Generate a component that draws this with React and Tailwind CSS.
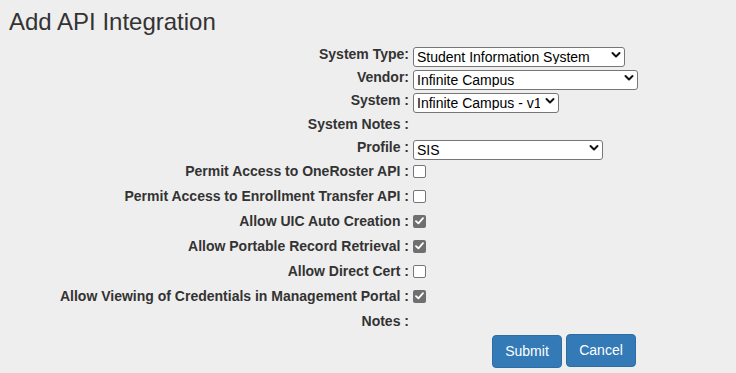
import React from "react";

function Chevron() {
  return (
    <svg
      className="pointer-events-none absolute right-[4px] top-1/2 -translate-y-1/2"
      width="10"
      height="7"
      viewBox="0 0 10 7"
      fill="none"
    >
      <path d="M1.5 1.5 L5 5 L8.5 1.5" stroke="#111" strokeWidth="2" strokeLinecap="round" strokeLinejoin="round" />
    </svg>
  );
}

function Select({ value, width }) {
  return (
    <div className={`relative h-[20px] ${width}`}>
      <select
        defaultValue={value}
        className="h-full w-full appearance-none rounded-[3px] border border-[#767676] bg-white pl-[3px] pr-[18px] text-[14px] leading-none text-black outline-none"
      >
        <option>{value}</option>
      </select>
      <Chevron />
    </div>
  );
}

function Check({ checked }) {
  if (checked) {
    return (
      <span className="flex h-[13px] w-[13px] items-center justify-center rounded-[2px] bg-[#6f6f6f]">
        <svg width="9" height="8" viewBox="0 0 9 8" fill="none">
          <path d="M1 4.2 L3.4 6.4 L8 1.2" stroke="white" strokeWidth="1.8" strokeLinecap="round" strokeLinejoin="round" />
        </svg>
      </span>
    );
  }
  return <span className="block h-[13px] w-[13px] rounded-[2px] border border-[#767676] bg-white" />;
}

function Row({ label, height, children }) {
  return (
    <div className={`flex items-center ${height}`}>
      <div className="w-[409px] shrink-0 text-right text-[14px] font-bold text-[#333]">{label}</div>
      <div className="ml-[4px] flex items-center">{children}</div>
    </div>
  );
}

const checks = [
  ["Permit Access to OneRoster API :", false],
  ["Permit Access to Enrollment Transfer API :", false],
  ["Allow UIC Auto Creation :", true],
  ["Allow Portable Record Retrieval :", true],
  ["Allow Direct Cert :", false],
  ["Allow Viewing of Credentials in Management Portal :", true],
];

export default function App() {
  return (
    <div className="h-[373px] w-[736px] overflow-hidden bg-[#eeeeee] font-['Liberation_Sans',Arial,sans-serif] text-[#333]">
      <h2 className="pl-[9px] pt-[9px] text-[24px] font-normal leading-[1.1]">Add API Integration</h2>

      <div className="mt-[8px]">
        <Row label="System Type:" height="h-[23px]">
          <Select value="Student Information System" width="w-[212px]" />
        </Row>
        <Row label="Vendor:" height="h-[23px]">
          <Select value="Infinite Campus" width="w-[225px]" />
        </Row>
        <Row label="System :" height="h-[23px]">
          <Select value="Infinite Campus - v1" width="w-[146px]" />
        </Row>
        <Row label="System Notes :" height="h-[24px]" />
        <Row label="Profile :" height="h-[22.5px]">
          <Select value="SIS" width="w-[190px]" />
        </Row>

        {checks.map(([label, checked]) => (
          <Row key={label} label={label} height="h-[25px]">
            <Check checked={checked} />
          </Row>
        ))}

        <Row label="Notes :" height="h-[25px]" />

        <div className="ml-[492px] flex items-start gap-[4px]">
          <button className="mt-[1px] h-[33px] w-[70px] rounded-[4px] border border-[#2e6da4] bg-[#337ab7] text-[14px] text-white">
            Submit
          </button>
          <button className="h-[33px] w-[70px] rounded-[4px] border border-[#2e6da4] bg-[#337ab7] text-[14px] text-white">
            Cancel
          </button>
        </div>
      </div>
    </div>
  );
}
